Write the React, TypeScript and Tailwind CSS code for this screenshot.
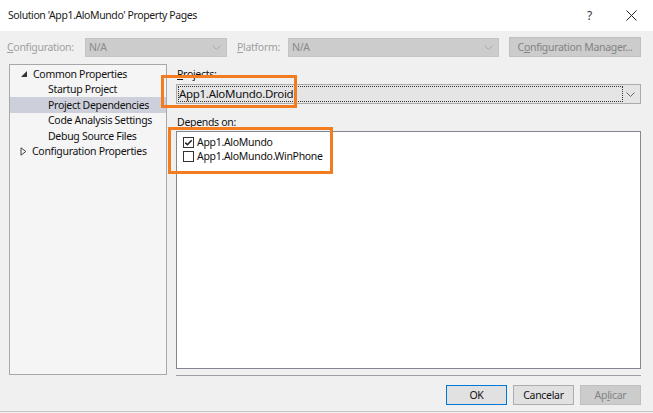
import React from "react";

const Chevron = ({ color = "#9a9a9a" }: { color?: string }) => (
  <svg width="9" height="5" viewBox="0 0 9 5" className="shrink-0">
    <path d="M0.5 0.5 L4.5 4.5 L8.5 0.5" fill="none" stroke={color} strokeWidth="1" />
  </svg>
);

const Check = () => (
  <svg width="11" height="11" viewBox="0 0 11 11">
    <rect x="0.5" y="0.5" width="10" height="10" fill="white" stroke="#333" strokeWidth="1" />
    <path d="M2.3 5.6 L4.4 7.7 L8.7 3.2" fill="none" stroke="#222" strokeWidth="1.6" />
  </svg>
);

const Box = () => (
  <svg width="11" height="11" viewBox="0 0 11 11">
    <rect x="0.5" y="0.5" width="10" height="10" fill="white" stroke="#333" strokeWidth="1" />
  </svg>
);

export default function App() {
  const font = { fontFamily: '"Noto Sans", "Open Sans", sans-serif' };
  return (
    <div
      className="relative w-[653px] h-[413px] overflow-hidden bg-[#f0f0f0] text-[10.5px] tracking-[-0.3px] text-[#111] leading-none"
      style={font}
    >
      {/* Title bar */}
      <div className="flex h-[31px] items-center bg-white pl-[8px] pr-[16px]">
        <span className="text-[10.5px] tracking-[-0.4px] text-[#1a1a1a]">Solution 'App1.AloMundo' Property Pages</span>
        <span className="ml-auto mr-[34px] text-[12px] text-[#333]">?</span>
        <svg width="11" height="11" viewBox="0 0 11 11">
          <path d="M0.5 0.5 L10.5 10.5 M10.5 0.5 L0.5 10.5" stroke="#222" strokeWidth="1" />
        </svg>
      </div>

      {/* Config row */}
      <div className="mt-[6px] flex h-[20px] items-center pl-[7px] text-[#a0a0a0]">
        <span className="w-[78px]">
          <span className="underline">C</span>onfiguration:
        </span>
        <div className="flex h-[19px] w-[142px] items-center border border-[#c4c4c4] bg-[#cccccc] pl-[3px] pr-[5px] text-[#8a8a8a]">
          <span>N/A</span>
          <span className="ml-auto">
            <Chevron color="#a8a8a8" />
          </span>
        </div>
        <span className="ml-[10px] w-[51px]">
          <span className="underline">P</span>latform:
        </span>
        <div className="flex h-[19px] w-[211px] items-center border border-[#c4c4c4] bg-[#cccccc] pl-[3px] pr-[5px] text-[#8a8a8a]">
          <span>N/A</span>
          <span className="ml-auto">
            <Chevron color="#a8a8a8" />
          </span>
        </div>
        <div className="ml-[10px] flex h-[20px] w-[132px] items-center justify-center border border-[#bfbfbf] bg-[#cccccc] text-[#838383]">
          C<span className="underline">o</span>nfiguration Manager...
        </div>
      </div>

      {/* Main area */}
      <div className="mt-[7px] flex">
        {/* Tree */}
        <div className="ml-[9px] h-[311px] w-[158px] border border-[#a8a8a8] bg-[#f5f5f5] pt-[1px]">
          <div className="flex h-[15.5px] items-center pl-[11px]">
            <svg width="6" height="6" viewBox="0 0 6 6" className="mr-[6px]">
              <path d="M6 0 L6 6 L0 6 Z" fill="#333" />
            </svg>
            <span>Common Properties</span>
          </div>
          <div className="flex h-[15.5px] items-center pl-[38px]">Startup Project</div>
          <div className="flex h-[15.5px] items-center bg-[#cdd0db] pl-[38px]">Project Dependencies</div>
          <div className="flex h-[15.5px] items-center pl-[38px]">Code Analysis Settings</div>
          <div className="flex h-[15.5px] items-center pl-[38px]">Debug Source Files</div>
          <div className="flex h-[15.5px] items-center pl-[10px]">
            <svg width="7" height="9" viewBox="0 0 7 9" className="mr-[5px]">
              <path d="M1 0.8 L5.8 4.5 L1 8.2 Z" fill="none" stroke="#444" strokeWidth="1" />
            </svg>
            <span>Configuration Properties</span>
          </div>
        </div>

        {/* Right side */}
        <div className="ml-[9px] flex w-[465px] flex-col">
          <div className="mt-[5px] h-[14px] pl-[1px]">
            <span className="underline">P</span>rojects:
          </div>
          <div className="mt-[1px] flex h-[20px] items-center border border-[#acacac] bg-[#e5e5e5] pl-[1px] pr-[5px]">
            <div className="flex h-[16px] w-[445px] items-center border border-dotted border-[#333] text-[11.5px] text-[#111]">
              App1.AloMundo.Droid
            </div>
            <span className="ml-auto">
              <Chevron color="#6a6a6a" />
            </span>
          </div>
          <div className="mt-[13px] h-[13px] pl-[1px]">
            <span className="underline">D</span>epends on:
          </div>
          <div className="mt-[1px] h-[238px] border border-[#828790] bg-white pt-[3px] pl-[6px]">
            <div className="flex h-[14px] items-center">
              <Check />
              <span className="ml-[3px]">App1.AloMundo</span>
            </div>
            <div className="flex h-[14px] items-center">
              <Box />
              <span className="ml-[3px]">App1.AloMundo.WinPhone</span>
            </div>
          </div>
          <div className="mt-[6px] h-[1px] bg-[#a0a0a0]" />
          <div className="mt-[9px] flex justify-end gap-[6px]">
            <div className="flex h-[20px] w-[61px] items-center justify-center border border-[#0078d7] bg-[#e1e1e1] text-[#111]">
              OK
            </div>
            <div className="flex h-[20px] w-[61px] items-center justify-center border border-[#adadad] bg-[#e1e1e1] text-[#111]">
              Cancelar
            </div>
            <div className="flex h-[20px] w-[61px] items-center justify-center border border-[#bfbfbf] bg-[#cccccc] text-[#838383]">
              Ap<span className="underline">l</span>icar
            </div>
          </div>
        </div>
      </div>

      {/* Bottom border */}
      <div className="absolute bottom-[1px] left-0 h-[1px] w-full bg-[#c4c4c4]" />

      {/* Orange highlight boxes */}
      <div className="pointer-events-none absolute left-[161px] top-[75px] h-[33px] w-[136px] border-[3px] border-[#f47c20]" />
      <div className="pointer-events-none absolute left-[168px] top-[127px] h-[47px] w-[165px] border-[3px] border-[#f47c20]" />
    </div>
  );
}
